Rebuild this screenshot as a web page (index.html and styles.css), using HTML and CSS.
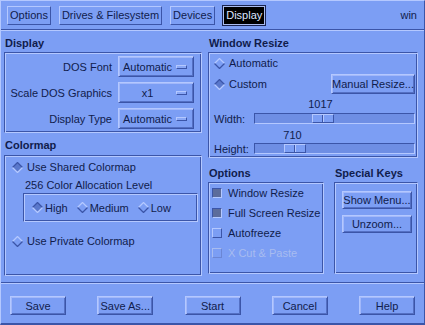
FILE: index.html
```html
<!DOCTYPE html>
<html>
<head>
<meta charset="utf-8">
<link rel="stylesheet" href="styles.css">
</head>
<body>
<div class="win">
  <div class="tabs">
    <span class="tab">Options</span>
    <span class="tab">Drives &amp; Filesystem</span>
    <span class="tab">Devices</span>
    <span class="tab active">Display</span>
    <span class="spacer"></span>
    <span class="host">win</span>
  </div>
  <div class="sep"></div>
  <div class="main">
    <div class="col left">
      <div class="heading">Display</div>
      <div class="frame f-display">
        <div class="form">
          <span class="lbl">DOS Font</span>
          <span class="optbtn"><span class="ot">Automatic</span><span class="ind"></span></span>
          <span class="lbl">Scale DOS Graphics</span>
          <span class="optbtn"><span class="ot">x1</span><span class="ind"></span></span>
          <span class="lbl">Display Type</span>
          <span class="optbtn"><span class="ot">Automatic</span><span class="ind"></span></span>
        </div>
      </div>
      <div class="heading h2">Colormap</div>
      <div class="frame f-colormap">
        <div class="radio on"><svg class="dia" viewBox="0 0 11 11"><polygon class="df" points="5.5,0.5 10.5,5.5 5.5,10.5 0.5,5.5"/><polyline class="dt" points="0.5,5.5 5.5,0.5 10.5,5.5"/><polyline class="db" points="0.5,5.5 5.5,10.5 10.5,5.5"/></svg>Use Shared Colormap</div>
        <div class="sublabel">256 Color Allocation Level</div>
        <div class="subframe">
          <div class="radio on"><svg class="dia" viewBox="0 0 11 11"><polygon class="df" points="5.5,0.5 10.5,5.5 5.5,10.5 0.5,5.5"/><polyline class="dt" points="0.5,5.5 5.5,0.5 10.5,5.5"/><polyline class="db" points="0.5,5.5 5.5,10.5 10.5,5.5"/></svg>High</div>
          <div class="radio"><svg class="dia" viewBox="0 0 11 11"><polygon class="df" points="5.5,0.5 10.5,5.5 5.5,10.5 0.5,5.5"/><polyline class="dt" points="0.5,5.5 5.5,0.5 10.5,5.5"/><polyline class="db" points="0.5,5.5 5.5,10.5 10.5,5.5"/></svg>Medium</div>
          <div class="radio"><svg class="dia" viewBox="0 0 11 11"><polygon class="df" points="5.5,0.5 10.5,5.5 5.5,10.5 0.5,5.5"/><polyline class="dt" points="0.5,5.5 5.5,0.5 10.5,5.5"/><polyline class="db" points="0.5,5.5 5.5,10.5 10.5,5.5"/></svg>Low</div>
        </div>
        <div class="radio private"><svg class="dia" viewBox="0 0 11 11"><polygon class="df" points="5.5,0.5 10.5,5.5 5.5,10.5 0.5,5.5"/><polyline class="dt" points="0.5,5.5 5.5,0.5 10.5,5.5"/><polyline class="db" points="0.5,5.5 5.5,10.5 10.5,5.5"/></svg>Use Private Colormap</div>
      </div>
    </div>
    <div class="col right">
      <div class="heading">Window Resize</div>
      <div class="frame f-resize">
        <div class="radio"><svg class="dia" viewBox="0 0 11 11"><polygon class="df" points="5.5,0.5 10.5,5.5 5.5,10.5 0.5,5.5"/><polyline class="dt" points="0.5,5.5 5.5,0.5 10.5,5.5"/><polyline class="db" points="0.5,5.5 5.5,10.5 10.5,5.5"/></svg>Automatic</div>
        <div class="custom-row">
          <div class="radio on"><svg class="dia" viewBox="0 0 11 11"><polygon class="df" points="5.5,0.5 10.5,5.5 5.5,10.5 0.5,5.5"/><polyline class="dt" points="0.5,5.5 5.5,0.5 10.5,5.5"/><polyline class="db" points="0.5,5.5 5.5,10.5 10.5,5.5"/></svg>Custom</div>
          <span class="btn manual">Manual Resize...</span>
        </div>
        <div class="val v1"><span class="vt" style="margin-left:57px">1017</span></div>
        <div class="scale-row"><span class="slbl">Width:</span><div class="trough"><div class="thumb" style="margin-left:57px"></div></div></div>
        <div class="val v2"><span class="vt" style="margin-left:29px">710</span></div>
        <div class="scale-row"><span class="slbl">Height:</span><div class="trough"><div class="thumb" style="margin-left:29px"></div></div></div>
      </div>
      <div class="split">
        <div class="opts">
          <div class="heading h3">Options</div>
          <div class="frame f-opts">
            <div class="check on"><span class="box"></span>Window Resize</div>
            <div class="check on"><span class="box"></span>Full Screen Resize</div>
            <div class="check"><span class="box"></span>Autofreeze</div>
            <div class="check dis"><span class="box"></span>X Cut &amp; Paste</div>
          </div>
        </div>
        <div class="keys">
          <div class="heading h3">Special Keys</div>
          <div class="frame f-keys">
            <span class="btn kbtn">Show Menu...</span>
            <span class="btn kbtn">Unzoom...</span>
          </div>
        </div>
      </div>
    </div>
  </div>
  <div class="sep sep2"></div>
  <div class="actions">
    <span class="btn act">Save</span>
    <span class="btn act">Save As...</span>
    <span class="btn act">Start</span>
    <span class="btn act">Cancel</span>
    <span class="btn act">Help</span>
  </div>
</div>
</body>
</html>
```
FILE: styles.css
```css
* { box-sizing: border-box; }
html, body { margin: 0; padding: 0; }
body {
  width: 425px;
  height: 325px;
  overflow: hidden;
  background: #7c9ef4;
  font-family: "Liberation Sans", Arial, sans-serif;
  font-size: 11px;
  color: #101c4c;
}
.win {
  width: 425px;
  height: 325px;
  display: flex;
  flex-direction: column;
  background: #7c9ef4;
  border-top: 1px solid #b4c8ff;
  border-left: 1px solid #b4c8ff;
  border-right: 1px solid #3b55a8;
  border-bottom: 2px solid #3b55a8;
}
.tabs {
  height: 28px;
  display: flex;
  align-items: center;
  gap: 8px;
  padding: 0 7px 0 6px;
}
.tab {
  height: 19px;
  line-height: 17px;
  padding: 0 2px;
  border: 1px solid;
  border-color: #b4c8ff #3b55a8 #3b55a8 #b4c8ff;
  white-space: nowrap;
}
.tab.active {
  background: #000;
  color: #dfe6ff;
  border-color: #aabcf0;
  outline: 1px solid #1a2450;
}
.spacer { flex: 1; }
.host { font-size: 11px; }
.sep {
  height: 2px;
  border-top: 1px solid #3b55a8;
  border-bottom: 1px solid #b4c8ff;
}
.main {
  display: flex;
  gap: 6px;
  padding-left: 3px;
}
.col { display: flex; flex-direction: column; }
.left { width: 198px; }
.right { width: 210px; }
.heading {
  font-weight: bold;
  height: 21px;
  padding-top: 5px;
  line-height: 14px;
  padding-left: 1px;
}
.heading.h2 { height: 22px; }
.heading.h3 { height: 24px; padding-top: 8px; }
.frame {
  border: 1px solid;
  border-color: #3b55a8 #b4c8ff #b4c8ff #3b55a8;
  box-shadow: inset 1px 1px 0 #b4c8ff, inset -1px -1px 0 #3b55a8;
}
.f-display { height: 81px; padding: 3px 7px 0 0; }
.form {
  display: grid;
  grid-template-columns: 1fr 76px;
  column-gap: 6px;
  row-gap: 5px;
  align-items: center;
}
.lbl { text-align: right; white-space: nowrap; }
.optbtn {
  height: 21px;
  display: flex;
  align-items: center;
  padding: 0 6px 0 3px;
  border: 1px solid;
  border-color: #b4c8ff #3b55a8 #3b55a8 #b4c8ff;
  box-shadow: inset 1px 1px 0 #a2b8fa, inset -1px -1px 0 #5470c4;
}
.ot { flex: 1; text-align: center; white-space: nowrap; }
.ind {
  width: 11px;
  height: 4px;
  margin-left: 3px;
  border: 1px solid;
  border-color: #b4c8ff #3b55a8 #3b55a8 #b4c8ff;
  background: #8aa8f6;
}
.radio {
  display: flex;
  align-items: center;
  gap: 4px;
  height: 14px;
  white-space: nowrap;
}
.dia { width: 11px; height: 11px; flex: none; }
.dia .df { fill: #7c9ef4; }
.dia .dt { fill: none; stroke: #b4c8ff; stroke-width: 1.3; }
.dia .db { fill: none; stroke: #3b55a8; stroke-width: 1.3; }
.radio.on .df { fill: #5a78cc; }
.radio.on .dt { stroke: #3b55a8; }
.radio.on .db { stroke: #b4c8ff; }
.f-colormap { height: 121px; padding: 4px 3px 0 7px; }
.sublabel { margin-top: 5px; margin-left: 13px; height: 12px; line-height: 12px; }
.subframe {
  margin: 2px 0 0 11px;
  height: 29px;
  display: flex;
  align-items: center;
  gap: 9px;
  padding-left: 8px;
  border: 1px solid;
  border-color: #3b55a8 #b4c8ff #b4c8ff #3b55a8;
  box-shadow: inset 1px 1px 0 #b4c8ff, inset -1px -1px 0 #3b55a8;
}
.subframe .radio { gap: 2px; }
.radio.private { margin-top: 12px; }
.f-resize { height: 106px; padding: 3px 2px 0 5px; }
.custom-row {
  display: flex;
  align-items: center;
  justify-content: space-between;
  margin-top: 4px;
  height: 20px;
}
.btn {
  display: flex;
  align-items: center;
  justify-content: center;
  white-space: nowrap;
  border: 1px solid;
  border-color: #b4c8ff #3b55a8 #3b55a8 #b4c8ff;
  box-shadow: inset 1px 1px 0 #a2b8fa, inset -1px -1px 0 #5470c4;
}
.manual { width: 84px; height: 20px; }
.val { height: 12px; line-height: 12px; padding-left: 40px; }
.v1 { margin-top: 4px; }
.v2 { margin-top: 5px; }
.vt { display: inline-block; width: 22px; text-align: center; overflow: visible; white-space: nowrap; }
.vt { text-indent: -3px; }
.scale-row { display: flex; align-items: center; height: 11px; margin-top: 3px; }
.v2 + .scale-row { margin-top: 2px; }
.slbl { width: 40px; }
.trough {
  flex: 1;
  height: 11px;
  border: 1px solid;
  border-color: #3b55a8 #b4c8ff #b4c8ff #3b55a8;
  background: #6e8ee4;
  display: flex;
}
.thumb {
  width: 22px;
  height: 9px;
  border: 1px solid;
  border-color: #b4c8ff #3b55a8 #3b55a8 #b4c8ff;
  background: linear-gradient(to right, #7c9ef4 0 9px, #3b55a8 9px 10px, #b4c8ff 10px 11px, #7c9ef4 11px);
}
.split { display: flex; gap: 10px; }
.opts { width: 116px; }
.keys { width: 84px; }
.f-opts { height: 92px; padding: 0 0 0 3px; }
.check {
  display: flex;
  align-items: center;
  gap: 6px;
  height: 20px;
  white-space: nowrap;
}
.box {
  width: 10px;
  height: 10px;
  border: 1px solid;
  border-color: #b4c8ff #3b55a8 #3b55a8 #b4c8ff;
  background: #7c9ef4;
}
.check.on .box {
  border-color: #3b55a8 #b4c8ff #b4c8ff #3b55a8;
  background: #5c6c9c;
}
.check.dis { color: #a8bcf0; }
.check.dis .box { border-color: #a8bcf0 #6b86d4 #6b86d4 #a8bcf0; }
.f-keys {
  height: 92px;
  padding: 8px 0 0 7px;
  display: flex;
  flex-direction: column;
  gap: 6px;
}
.kbtn { width: 70px; height: 18px; }
.sep2 { margin-top: 6px; }
.actions {
  display: flex;
  justify-content: space-between;
  padding: 12px 9px 0 9px;
}
.act { width: 56px; height: 19px; }
```
